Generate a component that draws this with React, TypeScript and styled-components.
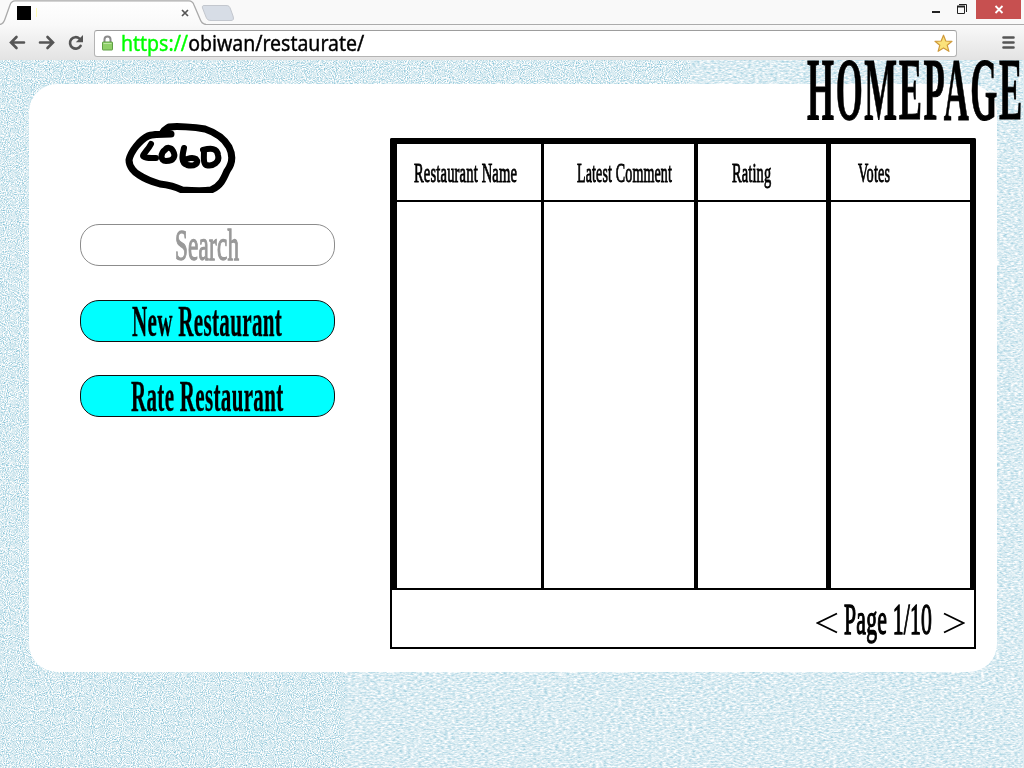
import React, { useLayoutEffect, useRef, useState } from "react";
import styled, { createGlobalStyle } from "styled-components";

const Global = createGlobalStyle`
  * { box-sizing: border-box; }
  body { margin: 0; width: 1024px; height: 768px; overflow: hidden; background: #fff; }
`;

const Window = styled.div`
  width: 1024px;
  height: 768px;
  display: flex;
  flex-direction: column;
  overflow: hidden;
`;

/* ---------- text squeezed to a given width ---------- */

const FitBox = styled.span<{ $w: number; $lh: number }>`
  display: block;
  flex: none;
  width: ${(p) => p.$w}px;
  height: ${(p) => p.$lh}px;
`;

const FitInk = styled.span<{ $size: number; $lh: number; $font: string; $weight: number; $stroke: number; $color: string; $track: number }>`
  display: inline-block;
  white-space: pre;
  transform-origin: 0 0;
  font-family: ${(p) => p.$font};
  font-weight: ${(p) => p.$weight};
  font-size: ${(p) => p.$size}px;
  line-height: ${(p) => p.$lh}px;
  letter-spacing: ${(p) => p.$track}em;
  margin-right: ${(p) => -p.$track}em;
  color: ${(p) => p.$color};
  -webkit-text-stroke: ${(p) => p.$stroke}px currentColor;
`;

type FitProps = {
  width: number;
  size: number;
  lineHeight: number;
  font?: string;
  weight?: number;
  stroke?: number;
  track?: number;
  color?: string;
  children: React.ReactNode;
};

function Fit({ width, size, lineHeight, font = '"Liberation Serif", serif', weight = 700, stroke = 0, track = 0, color = "#000", children }: FitProps) {
  const ref = useRef<HTMLSpanElement>(null);
  const [scale, setScale] = useState(0.5);
  useLayoutEffect(() => {
    if (ref.current) setScale(width / (ref.current.offsetWidth - track * size));
  }, [width, track, size]);
  return (
    <FitBox $w={width} $lh={lineHeight}>
      <FitInk
        ref={ref}
        $size={size}
        $lh={lineHeight}
        $font={font}
        $weight={weight}
        $stroke={stroke}
        $track={track}
        $color={color}
        style={{ transform: `scaleX(${scale})` }}
      >
        {children}
      </FitInk>
    </FitBox>
  );
}

/* ---------- browser chrome ---------- */

const Chrome = styled.header`
  flex: none;
  height: 60px;
  background: #f9f9f9;
`;

const TabStrip = styled.div`
  display: flex;
  justify-content: space-between;
  height: 24px;
`;

const TabArt = styled.svg`
  position: relative;
  display: block;
  flex: none;
`;

const WindowControls = styled.div`
  display: flex;
  padding-right: 3px;
`;

const CloseButton = styled.div`
  width: 45px;
  height: 19px;
  background: #c75050;
`;

const Toolbar = styled.div`
  display: flex;
  align-items: center;
  height: 36px;
  padding: 0 8px 0 8px;
  border-top: 1px solid #ababab;
  background: linear-gradient(#f9f9f9, #e3e3e3);
`;

const NavIcons = styled.svg`
  flex: none;
  width: 86px;
  height: 35px;
`;

const AddressBar = styled.div`
  display: flex;
  align-items: center;
  width: 863px;
  height: 27px;
  margin-top: 1px;
  padding: 0 3px 0 7px;
  border: 1px solid #b4b4b4;
  border-top-color: #9d9d9d;
  border-radius: 3px;
  background: #fff;
`;

const LockIcon = styled.svg`
  flex: none;
  margin-right: 8px;
`;

const StarIcon = styled.svg`
  flex: none;
  margin-left: auto;
`;

const MenuIcon = styled.svg`
  flex: none;
  margin-left: auto;
`;

const Scheme = styled.span`
  color: #00ff00;
`;

function BrowserChrome() {
  return (
    <Chrome>
      <TabStrip>
        <TabArt width="240" height="25" viewBox="0 0 240 25">
          <defs>
            <linearGradient id="tab" x1="0" y1="0" x2="0" y2="1">
              <stop offset="0" stopColor="#fff" />
              <stop offset="1" stopColor="#f9f9f9" />
            </linearGradient>
          </defs>
          <path d="M0 24.5C3 24 4 22 5 19L10 5C11 2 12 .8 15 .8H189C192 .8 193 2 194 5L200 19C201 22 202 24 206 24.5V25H0Z" fill="url(#tab)" />
          <path d="M0 24.5C3 24 4 22 5 19L10 5C11 2 12 .8 15 .8H189C192 .8 193 2 194 5L200 19C201 22 202 24 206 24.5" fill="none" stroke="#aaa" strokeWidth="1.3" />
          <path d="M204 5.5H226C229 5.5 229.500 6.500 230.500 9L233 16C234 19 233.500 20.500 231 20.500H211C208 20.500 207 19.500 206 17L202.500 8C202 6.500 202.500 5.500 204 5.500Z" fill="#d7dde6" stroke="#c3c7ce" />
          <rect x="17" y="6" width="14" height="14" fill="#000" />
          <rect x="36" y="8" width="1" height="9" fill="#fffbb5" />
          <path d="M182 10L188 16M188 10L182 16" stroke="#555" strokeWidth="1.7" />
        </TabArt>
        <WindowControls>
          <svg width="45" height="19" viewBox="0 0 45 19">
            <path d="M1 12H9" stroke="#222" strokeWidth="2" />
            <path d="M26.500 6.500H33.500V13.500H26.500Z" fill="none" stroke="#222" />
            <path d="M26 6.500H34" stroke="#222" strokeWidth="2" />
            <path d="M28 4.500H35.500V12" fill="none" stroke="#222" />
          </svg>
          <CloseButton>
            <svg width="45" height="19" viewBox="0 0 45 19">
              <path d="M19.500 6L26.500 13M26.500 6L19.500 13" stroke="#fff" strokeWidth="1.800" />
            </svg>
          </CloseButton>
        </WindowControls>
      </TabStrip>
      <Toolbar>
        <NavIcons viewBox="0 0 86 35">
          <g fill="none" stroke="#555" strokeWidth="2.600" strokeLinecap="round">
            <path d="M16 17.500H4M8.500 12L3 17.500L8.500 23" />
            <path d="M32 17.500H44M39.500 12L45 17.500L39.500 23" />
            <path d="M72.600 20.800A5.700 5.700 0 1 1 71.500 13.600" />
          </g>
          <path d="M75 10V17.200H67.800Z" fill="#555" />
        </NavIcons>
        <AddressBar>
          <LockIcon width="11" height="16" viewBox="0 0 11 16">
            <path d="M2.500 8V4.500A3 3 0 0 1 8.500 4.500V8" fill="none" stroke="#8b8b8b" strokeWidth="2" />
            <rect x=".5" y="7" width="10" height="8" rx=".5" fill="#8fd068" stroke="#5f9f45" />
            <path d="M1.500 8.500H9.500" stroke="#bfe6a5" />
          </LockIcon>
          <Fit width={243} size={21} lineHeight={25} font={'"Noto Sans", sans-serif'} weight={400} stroke={0.4}>
            <Scheme>https://</Scheme>obiwan/restaurate/
          </Fit>
          <StarIcon width="19" height="19" viewBox="0 0 19 19">
            <path d="M9.500 1.200L11.800 7L18 7.300L13.200 11.200L14.900 17.300L9.500 13.900L4.100 17.300L5.800 11.200L1 7.300L7.200 7Z" fill="#fbe27a" stroke="#cf9a3c" strokeWidth="1.200" strokeLinejoin="round" />
          </StarIcon>
        </AddressBar>
        <MenuIcon width="15" height="15" viewBox="0 0 15 15">
          <path d="M2.500 2.500H12.500M2.500 7.500H12.500M2.500 12.500H12.500" stroke="#555" strokeWidth="2.600" strokeLinecap="round" />
        </MenuIcon>
      </Toolbar>
    </Chrome>
  );
}

/* ---------- page ---------- */

const Page = styled.main`
  position: relative;
  flex: 1;
  padding: 24px 27px 96px 29px;
  background: #dceef4;
`;

const Backdrop = styled.svg`
  position: absolute;
  inset: 0;
`;

const Panel = styled.section`
  position: relative;
  display: flex;
  justify-content: space-between;
  height: 588px;
  padding: 38px 21px 0 50.5px;
  border-radius: 28px;
  background: #fff;
`;

const Title = styled.h1`
  position: absolute;
  top: -11px;
  left: 807px;
  margin: 0;
`;

const Sidebar = styled.nav`
  display: flex;
  flex-direction: column;
  width: 255px;
`;

const Logo = styled.svg`
  margin: -2px 0 31px 43px;
`;

const Pill = styled.div<{ $muted?: boolean; $gap?: number }>`
  display: flex;
  justify-content: center;
  align-items: center;
  height: 42px;
  margin-bottom: ${(p) => p.$gap ?? 0}px;
  border: 1px solid ${(p) => (p.$muted ? "#8c8c8c" : "#111")};
  border-radius: 19px;
  background: ${(p) => (p.$muted ? "#fff" : "#00ffff")};
`;

const Table = styled.div`
  display: flex;
  flex-direction: column;
  width: 586px;
  height: 511px;
  margin-top: 16px;
`;

const Columns = styled.div`
  display: flex;
  height: 450px;
  border: 6px solid #000;
  border-left-width: 7px;
  border-bottom: 0;
  border-radius: 2px 2px 0 0;
`;

const Column = styled.div<{ $w: number; $rule: number }>`
  flex: none;
  width: ${(p) => p.$w}px;
  border-right: ${(p) => p.$rule}px solid #000;
`;

const HeadCell = styled.div<{ $pad: number }>`
  height: 58px;
  padding: 12px 0 0 ${(p) => p.$pad}px;
  border-bottom: 2px solid #000;
`;

const Footer = styled.div`
  display: flex;
  justify-content: flex-end;
  height: 61px;
  padding: 1px 9px 0 0;
  border: 2.5px solid #000;
`;

const Arrow = styled.svg`
  flex: none;
  margin-top: 21px;
`;

const PageLabel = styled.div`
  margin: 0 11px 0 6px;
`;

const columns = [
  { label: "Restaurant Name", text: 103, width: 147, rule: 3, pad: 17 },
  { label: "Latest Comment", text: 95, width: 154, rule: 4, pad: 33 },
  { label: "Rating", text: 39, width: 133, rule: 5, pad: 34 },
  { label: "Votes", text: 32, width: 139, rule: 0, pad: 27 },
];

export default function App() {
  return (
    <Window>
      <Global />
      <BrowserChrome />
      <Page>
        <Backdrop width="1024" height="708">
          <defs>
            <filter id="grain" x="0" y="0" width="1" height="1" colorInterpolationFilters="sRGB">
              <feTurbulence type="fractalNoise" baseFrequency="0.93" numOctaves="2" seed="4" />
              <feColorMatrix values="0.950 0 0 0 0.370  0.480 0 0 0 0.680  0.320 0 0 0 0.785  0 0 0 0 1" />
            </filter>
            <filter id="streaks" x="0" y="0" width="1" height="1" colorInterpolationFilters="sRGB">
              <feTurbulence type="fractalNoise" baseFrequency="0.270 0.650" numOctaves="2" seed="9" />
              <feColorMatrix values="0.580 0 0 0 0.565  0.300 0 0 0 0.775  0.200 0 0 0 0.850  0 0 0 0 1" />
            </filter>
          </defs>
          <rect x="345" width="678" height="708" filter="url(#streaks)" />
          <rect width="345" height="708" filter="url(#grain)" />
          <rect x="345" width="345" height="30" filter="url(#grain)" />
        </Backdrop>
        <Panel>
          <Sidebar>
            <Logo width="114" height="73" viewBox="0 0 114 73">
              <g fill="none" stroke="#000" strokeLinecap="round" strokeLinejoin="round">
                <path strokeWidth="7" d="M48 14C38 14 29 14 25 16C17 20 8 31 6 40C6 47 12 53 16 55C22 59 30 62 37 64C46 65 53 67 59 70C72 71 82 71 88 70C98 66 101 58 104 51C110 43 110 35 106 27C101 18 91 12 82 9C71 7 54 6 46 7C43 9 41 10 40 12" />
                <path strokeWidth="6" d="M28 24C25 30 20 34 20 36C24 39 28 38 33 38" />
                <path strokeWidth="6" d="M43 29C37 33 37 41 43 41C51 41 53 36 50 31C48 27 44 27 42 30" />
                <path strokeWidth="6" d="M61 28C59 36 58 43 64 45C71 47 77 43 73 39C70 37 64 38 61 41" />
                <path strokeWidth="6" d="M81 31C81 36 80 43 83 45C90 47 97 42 95 35C94 28 88 28 80 30" />
              </g>
            </Logo>
            <Pill $muted $gap={34}>
              <Fit width={64} size={45} lineHeight={41} weight={400} stroke={1.3} track={0.01} color="#999">Search</Fit>
            </Pill>
            <Pill $gap={33}>
              <Fit width={150} size={45} lineHeight={41} track={0.015} stroke={0.4}>New Restaurant</Fit>
            </Pill>
            <Pill>
              <Fit width={152} size={45} lineHeight={41} track={0.015} stroke={0.4}>Rate Restaurant</Fit>
            </Pill>
          </Sidebar>
          <Table>
            <Columns>
              {columns.map((c) => (
                <Column key={c.label} $w={c.width} $rule={c.rule}>
                  <HeadCell $pad={c.pad}>
                    <Fit width={c.text} size={28} lineHeight={34} weight={400} stroke={0.9} track={0.01}>{c.label}</Fit>
                  </HeadCell>
                </Column>
              ))}
            </Columns>
            <Footer>
              <Arrow width="22" height="22" viewBox="0 0 22 22">
                <path d="M21 1.500L1.500 11L21 20.500" fill="none" stroke="#000" strokeWidth="1.900" />
              </Arrow>
              <PageLabel>
                <Fit width={88} size={45} lineHeight={56} weight={400} stroke={1.4} track={0.01}>Page 1/10</Fit>
              </PageLabel>
              <Arrow width="22" height="22" viewBox="0 0 22 22">
                <path d="M1 1.500L20.500 11L1 20.500" fill="none" stroke="#000" strokeWidth="1.900" />
              </Arrow>
            </Footer>
          </Table>
        </Panel>
        <Title>
          <Fit width={215} size={89} lineHeight={80} track={0.045} stroke={1}>HOMEPAGE</Fit>
        </Title>
      </Page>
    </Window>
  );
}
